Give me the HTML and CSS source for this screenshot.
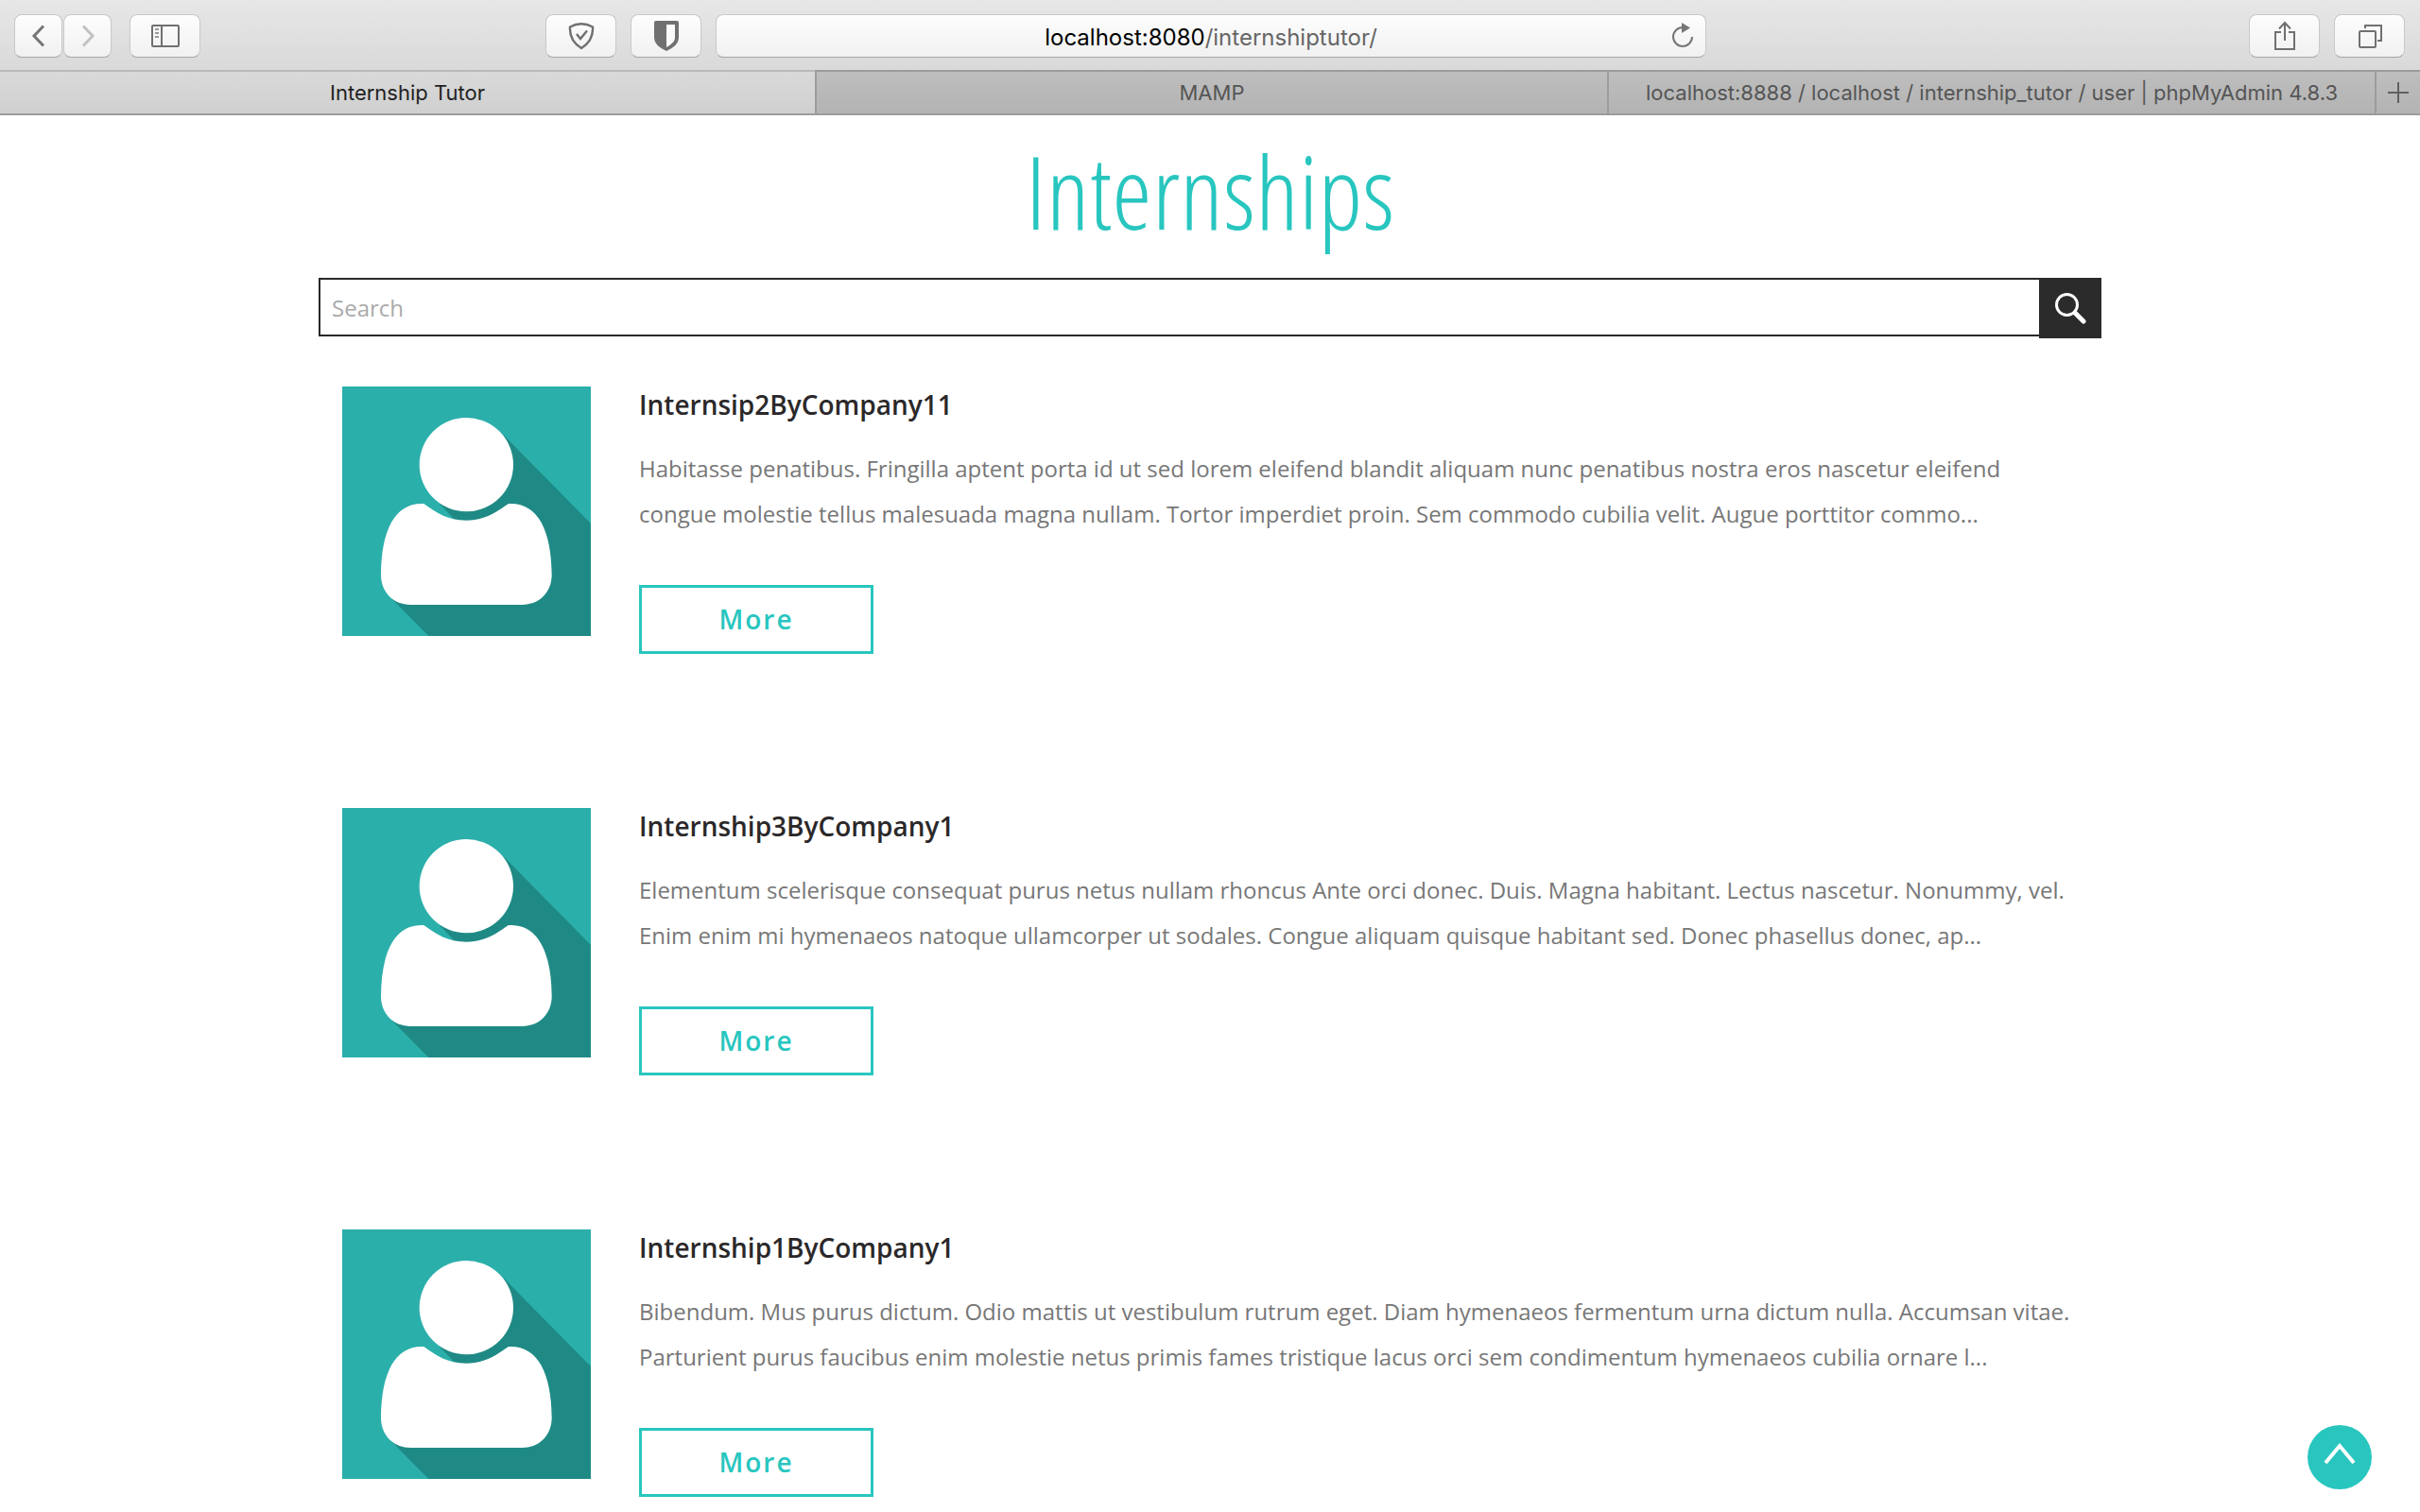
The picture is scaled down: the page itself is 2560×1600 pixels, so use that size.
FILE: index.html
```html
<!DOCTYPE html>
<html lang="en">
<head>
<meta charset="utf-8">
<title>Internship Tutor</title>
<link rel="stylesheet" href="styles.css">
</head>
<body>
<svg class="defs" aria-hidden="true">
  <symbol id="avatar" viewBox="66 57 789 792" preserveAspectRatio="none">
    <rect x="66" y="57" width="789" height="792" fill="#2bafab"/>
    <path d="M580 213L855 492V849H340L225 733L330 480L420 476L375 430L460 305Z" fill="#1f8a85"/>
    <path d="M325 429C365 458 400 482 460 482C520 482 555 455 594 429C685 424 730 510 731 655C731 712 690 750 637 750H283C230 750 189 712 189 655C190 510 235 424 325 429Z" fill="#fff"/>
    <circle cx="460" cy="305" r="149" fill="#fff"/>
  </symbol>
</svg>

<header class="browser">
  <div class="toolbar">
    <div class="tools tools-left">
      <div class="nav">
        <button class="tool tool-nav" type="button" aria-label="Back"><svg width="16" height="26" viewBox="0 0 16 26"><path d="M13 2.500L3 13L13 23.500" stroke="#757575" stroke-width="3"/></svg></button>
        <button class="tool tool-nav" type="button" aria-label="Forward"><svg width="16" height="26" viewBox="0 0 16 26"><path d="M3 2.500L13 13L3 23.500" stroke="#c2c2c2" stroke-width="3"/></svg></button>
      </div>
      <button class="tool" type="button" aria-label="Sidebar"><svg width="30" height="24" viewBox="0 0 30 24"><rect x="1" y="1" width="28" height="22" rx="1" stroke="#707070" stroke-width="2"/><path d="M11 1V23" stroke="#707070" stroke-width="2"/><path d="M4 5H8M4 9H8M4 13H8" stroke="#9a9a9a" stroke-width="2"/></svg></button>
      <button class="tool tool-first" type="button" aria-label="Ad blocker"><svg width="28" height="30" viewBox="0 0 28 30"><path d="M2 5.500Q14 -1 26 5.500Q27 20 14 28Q1 20 2 5.500Z" stroke="#707070" stroke-width="2.400"/><path d="M9 13L13 18L20 9.500" stroke="#707070" stroke-width="2.400"/></svg></button>
      <button class="tool" type="button" aria-label="Password manager"><svg width="26" height="32" viewBox="0 0 26 32"><path d="M0 2Q0 0 2 0H24Q26 0 26 2V18Q26 26 13 32Q0 26 0 18Z" fill="#707070"/><path d="M13 4H22V18Q22 23 13 28Z" fill="#fafafa"/></svg></button>
    </div>
    <div class="address">
      <span class="url"><span class="host">localhost:8080</span>/internshiptutor/</span>
      <button class="reload" type="button" aria-label="Reload"><svg width="24" height="28" viewBox="0 0 24 28"><path d="M22 15A10 10 0 1 1 12 5" stroke="#757575" stroke-width="2"/><path d="M11 0V11L20 5.500Z" fill="#757575"/></svg></button>
    </div>
    <div class="tools tools-right">
      <button class="tool" type="button" aria-label="Share"><svg width="24" height="32" viewBox="0 0 24 32"><path d="M8 12H2V30H22V12H16M12 21V3M6 8.500L12 2L18 8.500" stroke="#707070" stroke-width="2"/></svg></button>
      <button class="tool" type="button" aria-label="Show tabs"><svg width="26" height="26" viewBox="0 0 26 26"><rect x="2" y="8" width="17" height="17" rx="1" stroke="#707070" stroke-width="2"/><path d="M8 5V2H25V18H21" stroke="#707070" stroke-width="2"/></svg></button>
    </div>
  </div>
  <nav class="tabs">
    <a class="tab tab-active" href="#">Internship Tutor</a>
    <a class="tab" href="#">MAMP</a>
    <a class="tab" href="#">localhost:8888 / localhost / internship_tutor / user | phpMyAdmin 4.8.3</a>
    <button class="tab tab-add" type="button" aria-label="New tab"><svg width="22" height="22" viewBox="0 0 22 22"><path d="M11 0V22M0 11H22" stroke="#606060" stroke-width="2"/></svg></button>
  </nav>
</header>

<main class="page">
  <h1 class="title">Internships</h1>
  <form class="search">
    <input class="search-box" type="search" placeholder="Search" aria-label="Search">
    <button class="search-go" type="button" aria-label="Go"><svg width="34" height="34" viewBox="0 0 34 34"><circle cx="13.500" cy="13.500" r="11" stroke="#fff" stroke-width="3"/><path d="M22 22L31 31" stroke="#fff" stroke-width="5" stroke-linecap="round"/></svg></button>
  </form>

  <section class="list">
    <article class="item">
      <svg class="avatar" role="img" aria-label="Company"><use href="#avatar"/></svg>
      <div class="info">
        <h2 class="name">Internsip2ByCompany11</h2>
        <p class="text">Habitasse penatibus. Fringilla aptent porta id ut sed lorem eleifend blandit aliquam nunc penatibus nostra eros nascetur eleifend<br>congue molestie tellus malesuada magna nullam. Tortor imperdiet proin. Sem commodo cubilia velit. Augue porttitor commo...</p>
        <a class="more" href="#">More</a>
      </div>
    </article>
    <article class="item">
      <svg class="avatar" role="img" aria-label="Company"><use href="#avatar"/></svg>
      <div class="info">
        <h2 class="name">Internship3ByCompany1</h2>
        <p class="text">Elementum scelerisque consequat purus netus nullam rhoncus Ante orci donec. Duis. Magna habitant. Lectus nascetur. Nonummy, vel.<br>Enim enim mi hymenaeos natoque ullamcorper ut sodales. Congue aliquam quisque habitant sed. Donec phasellus donec, ap...</p>
        <a class="more" href="#">More</a>
      </div>
    </article>
    <article class="item">
      <svg class="avatar" role="img" aria-label="Company"><use href="#avatar"/></svg>
      <div class="info">
        <h2 class="name">Internship1ByCompany1</h2>
        <p class="text">Bibendum. Mus purus dictum. Odio mattis ut vestibulum rutrum eget. Diam hymenaeos fermentum urna dictum nulla. Accumsan vitae.<br>Parturient purus faucibus enim molestie netus primis fames tristique lacus orci sem condimentum hymenaeos cubilia ornare l...</p>
        <a class="more" href="#">More</a>
      </div>
    </article>
  </section>
</main>

<button class="to-top" type="button" aria-label="Back to top"><svg width="34" height="24" viewBox="0 0 34 24"><path d="M2 22L17 4L32 22" stroke="#fff" stroke-width="4"/></svg></button>
</body>
</html>
```
FILE: styles.css
```css
* { box-sizing: border-box; }

body {
  margin: 0;
  background: #fff;
  font-family: "Open Sans", sans-serif;
  font-size: 24px;
  color: #777;
}

button {
  margin: 0;
  padding: 0;
  border: 0;
  background: none;
  font: inherit;
}

svg { display: block; fill: none; }
a { text-decoration: none; }
.defs { display: none; }

/* Browser window */
.browser {
  font-family: Inter, "Liberation Sans", sans-serif;
}

.toolbar {
  display: grid;
  grid-template-columns: 727fr 1048fr 724fr;
  column-gap: 15px;
  padding: 15px 16px 13px 15px;
  background: linear-gradient(#e7e7e7, #d9d9d9);
}

.tools { display: flex; gap: 15px; }
.tools-right { justify-content: flex-end; }
.tool-first { margin-left: auto; }
.nav { display: flex; gap: 1px; margin-right: 4px; }

.tool, .address {
  height: 46px;
  border: 1px solid #c9c9c9;
  border-bottom-color: #a6a6a6;
  border-radius: 8px;
  background: linear-gradient(#fdfdfd, #f1f1f1);
}

.tool {
  display: flex;
  align-items: center;
  justify-content: center;
  width: 75px;
}

.tool-nav { width: 51px; }

.address {
  display: flex;
  align-items: center;
  padding: 0 12px 0 36px;
}

.url {
  flex: 1;
  padding-top: 2px;
  text-align: center;
  font-size: 24px;
  color: #666;
}

.host { color: #000; }

.tabs {
  display: grid;
  grid-template-columns: 862fr 838fr 812fr 48px;
  height: 48px;
}

.tab {
  display: flex;
  align-items: center;
  justify-content: center;
  border: solid #9c9c9c;
  border-width: 2px 0 2px 2px;
  background: linear-gradient(#bebebe, #b3b3b3);
  font-size: 22px;
  color: #555;
  white-space: nowrap;
}

.tab-active {
  border-left: 0;
  border-top-color: #b9b9b9;
  background: linear-gradient(#d9d9d9, #d0d0d0);
  color: #222;
}

/* Page */
.page {
  width: 1886px;
  max-width: 100%;
  margin: 0 auto;
  padding-top: 6px;
}

.title {
  margin: 0 0 18px;
  font-family: "Open Sans Condensed Light", "Open Sans Condensed", "Open Sans", sans-serif;
  font-size: 108px;
  font-weight: 300;
  line-height: 148px;
  text-align: center;
  color: #28c6bf;
}

.search {
  display: flex;
  align-items: flex-start;
}

.search-box {
  flex: 1;
  height: 62px;
  margin: 0;
  padding: 0 12px;
  border: 2px solid #2b2829;
  border-right: 0;
  border-radius: 0;
  outline: 0;
  background: #fff;
  appearance: none;
  font: inherit;
}

.search-box::placeholder { color: #aaa; opacity: 1; }

.search-go {
  display: flex;
  align-items: center;
  justify-content: center;
  width: 66px;
  height: 64px;
  background: #2b2b2b;
}

.list {
  display: grid;
  gap: 163px;
  padding: 51px 0 16px 25px;
}

.item {
  display: flex;
  align-items: flex-start;
  gap: 51px;
}

.avatar {
  flex: none;
  width: 263px;
  height: 264px;
}

.name {
  margin: 0 0 25px;
  font-size: 28px;
  font-weight: 600;
  line-height: 38px;
  color: #2b2829;
}

.text {
  margin: 0 0 51px;
  line-height: 48px;
}

.more {
  display: flex;
  align-items: center;
  justify-content: center;
  width: 248px;
  height: 73px;
  padding-bottom: 2px;
  border: 3px solid #28c6bf;
  font-size: 28px;
  font-weight: 600;
  letter-spacing: 2px;
  color: #28c6bf;
}

.to-top {
  position: fixed;
  right: 51px;
  bottom: 24px;
  display: flex;
  align-items: center;
  justify-content: center;
  width: 68px;
  height: 68px;
  padding-bottom: 8px;
  border-radius: 50%;
  background: #28c6bf;
}
```
